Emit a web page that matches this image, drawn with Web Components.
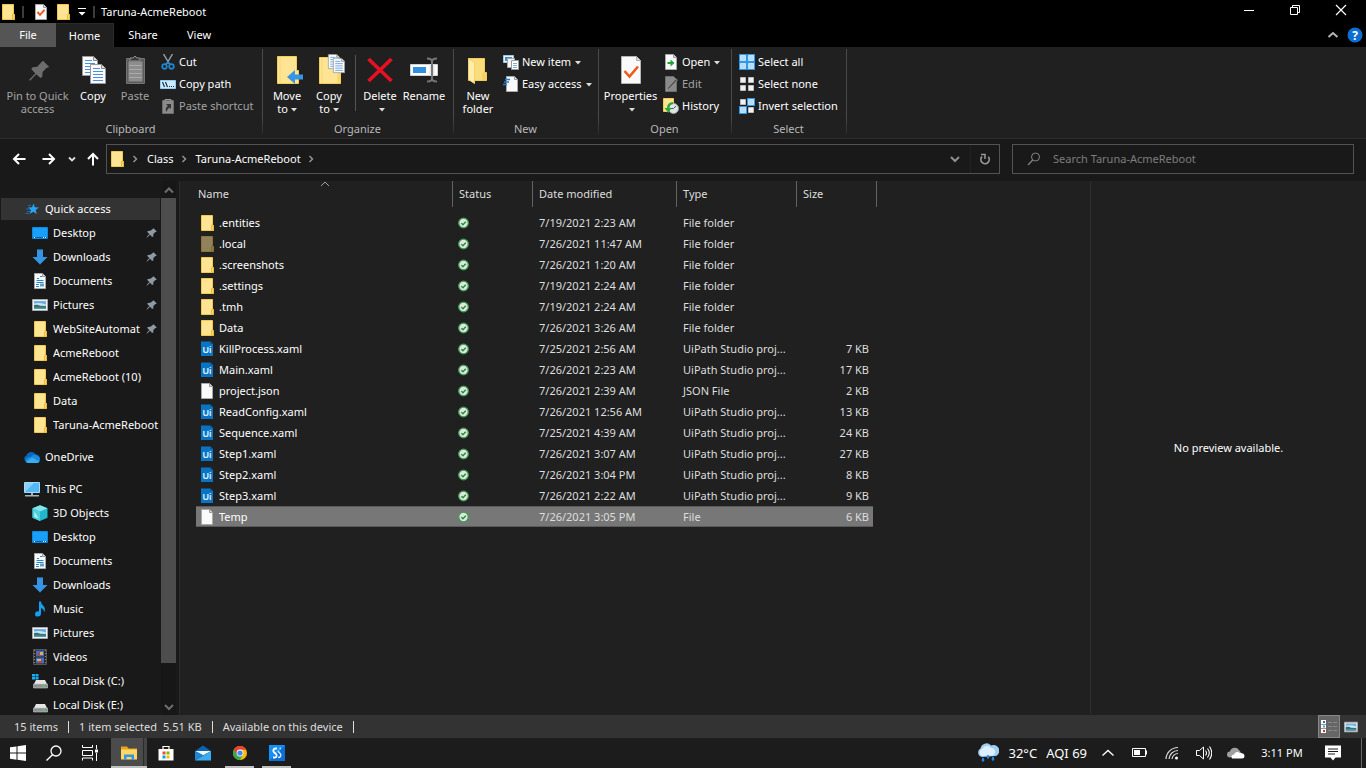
<!DOCTYPE html>
<html lang="en">
<head>
<meta charset="utf-8">
<meta name="viewport" content="width=device-width, initial-scale=1">
<title>Taruna-AcmeReboot</title>
<style>
  html, body {
    margin: 0;
    height: 100%;
  }
  body {
    background: #202020;
    color: #fff;
    font: 11px/16px "Noto Sans", "Open Sans", sans-serif;
    overflow: hidden;
  }
</style>
</head>
<body>
<explorer-window>
  <title-bar slot="top" heading="Taruna-AcmeReboot"></title-bar>
  <ribbon-tabs slot="top"></ribbon-tabs>
  <ribbon-bar slot="top">
    <ribbon-group label="Clipboard" style="--group-width: 263px">
      <ribbon-button big icon="pinBig" disabled style="--button-width: 69px">Pin to Quick access</ribbon-button>
      <ribbon-button big icon="copy">Copy</ribbon-button>
      <ribbon-button big icon="paste" disabled>Paste</ribbon-button>
      <ribbon-column>
        <ribbon-button icon="cut">Cut</ribbon-button>
        <ribbon-button icon="copyPath">Copy path</ribbon-button>
        <ribbon-button icon="pasteShortcut" disabled>Paste shortcut</ribbon-button>
      </ribbon-column>
    </ribbon-group>
    <ribbon-group label="Organize" style="--group-width: 191px">
      <ribbon-button big menu icon="moveTo">Move<br>to</ribbon-button>
      <ribbon-button big menu icon="copyTo">Copy<br>to</ribbon-button>
      <ribbon-divider></ribbon-divider>
      <ribbon-button big menu icon="delete">Delete</ribbon-button>
      <ribbon-button big icon="rename" style="--button-width: 46px">Rename</ribbon-button>
    </ribbon-group>
    <ribbon-group label="New" style="--group-width: 145px">
      <ribbon-button big icon="newFolder">New folder</ribbon-button>
      <ribbon-column>
        <ribbon-button menu icon="newItem">New item</ribbon-button>
        <ribbon-button menu icon="easyAccess">Easy access</ribbon-button>
      </ribbon-column>
    </ribbon-group>
    <ribbon-group label="Open" style="--group-width: 133px">
      <ribbon-button big menu icon="properties" style="--button-width: 57px">Properties</ribbon-button>
      <ribbon-column>
        <ribbon-button menu icon="open">Open</ribbon-button>
        <ribbon-button icon="edit" disabled>Edit</ribbon-button>
        <ribbon-button icon="history">History</ribbon-button>
      </ribbon-column>
    </ribbon-group>
    <ribbon-group label="Select" style="--group-width: 115px">
      <ribbon-column>
        <ribbon-button icon="selectAll">Select all</ribbon-button>
        <ribbon-button icon="selectNone">Select none</ribbon-button>
        <ribbon-button icon="invert">Invert selection</ribbon-button>
      </ribbon-column>
    </ribbon-group>
  </ribbon-bar>
  <address-bar slot="top" placeholder="Search Taruna-AcmeReboot"></address-bar>

  <nav-pane slot="nav">
    <nav-item icon="star" root current>Quick access</nav-item>
    <nav-item icon="desktop" pinned>Desktop</nav-item>
    <nav-item icon="download" pinned>Downloads</nav-item>
    <nav-item icon="document" pinned>Documents</nav-item>
    <nav-item icon="picture" pinned>Pictures</nav-item>
    <nav-item icon="folder" pinned>WebSiteAutomat</nav-item>
    <nav-item icon="folder">AcmeReboot</nav-item>
    <nav-item icon="folder">AcmeReboot (10)</nav-item>
    <nav-item icon="folder">Data</nav-item>
    <nav-item icon="folder">Taruna-AcmeReboot</nav-item>
    <nav-item icon="oneDrive" root>OneDrive</nav-item>
    <nav-item icon="pc" root>This PC</nav-item>
    <nav-item icon="cube">3D Objects</nav-item>
    <nav-item icon="desktop">Desktop</nav-item>
    <nav-item icon="document">Documents</nav-item>
    <nav-item icon="download">Downloads</nav-item>
    <nav-item icon="music">Music</nav-item>
    <nav-item icon="picture">Pictures</nav-item>
    <nav-item icon="video">Videos</nav-item>
    <nav-item icon="diskC">Local Disk (C:)</nav-item>
    <nav-item icon="disk">Local Disk (E:)</nav-item>
  </nav-pane>
  <file-list slot="files"></file-list>
  <preview-pane slot="preview">No preview available.</preview-pane>
  <status-bar slot="bottom"></status-bar>
  <task-bar slot="bottom"></task-bar>
</explorer-window>

<script>
// Shapes shared by several icons.
const FOLDER = `
  <path d="M2.5.5h11v10h1v5h-12z" fill="#ffe494" stroke="#f5c944"/>
  <path d="M12.5 15v-4.500h2v5h-2" fill="#ffd96a" stroke="#e8b93b"/>`
const PAGE = '<path d="M2.500.5h8l3 3v12h-11z" fill="#fafafa" stroke="#a9a9a9"/><path d="M10.500.5v3h3" fill="#ddd" stroke="#999"/>'
const SHEET = '<path d="M.5.5h11l4 4v15H.5z" fill="#fafafa" stroke="#999"/><path d="M11.500.5v4h4" fill="#ddd" stroke="#888"/><path d="M3 4.500h7M3 7.500h10M3 10.500h10M3 13.500h10M3 16.500h10" stroke="#4a90e2"/>'
const DRIVE = '<path d="M4 7h9l2 4H2z" fill="#e6e6e6"/><path d="M1.500 11h14v4h-14z" fill="#8f9295" stroke="#c8c8c8" stroke-width=".6"/><circle cx="12" cy="13" r="1" fill="#3be04b"/>'
const PIN = '<path d="M10 1.500 14.500 6l-2 .6-2.600 2.600-.3 3.300-1.400.8-2.700-3L1.500 14 .9 14l0-.7 3.600-4-2.900-2.600.8-1.300 3.400-.3L8.400 3z" fill="#8e99a3"/>'
const PICTURE = '<path d="M.5 2.500h15v11H.5z" fill="#f4f4f4" stroke="#a8a8a8"/><path d="M2 4h12v8H2z" fill="#70aee8"/><path d="M2 6.500q6-1.500 12 1V9H2z" fill="#c9e6f5"/><path d="M2 8q4-1 6 .8L14 9v3H2z" fill="#39736a"/><path d="M2 10.500h12V12H2z" fill="#4f97b5"/>'
const SMALL_BOX = (x, y, on) => on
  ? `<path d="M${x} ${y}h8v8h-8z" fill="#2f96e8"/><path d="M${x + 1.5} ${y + 1.5}h5v5h-5z" fill="#b5ddfb" stroke="#e5f5ff" stroke-width=".7"/>`
  : `<path d="M${x + 1.5} ${y + 1.5}h5v5h-5z" fill="#f2f2f2" stroke="#bdbdbd"/>`

// [viewBox width, viewBox height, markup]
const ICONS = {
  folder: [16, 16, FOLDER],
  page: [16, 16, PAGE],
  uipath: [16, 16, '<path d="M2 .5h9.500L14 3v12H2z" fill="#0a74c4"/><path d="M11.500.5V3H14" fill="#064f8c"/><text x="8" y="11.500" text-anchor="middle" font-family="Liberation Sans, sans-serif" font-weight="700" font-size="9" fill="#d8ecfa">Ui</text>'],
  check: [16, 16, '<circle cx="8.500" cy="8" r="4.800" fill="#dfe6df" stroke="#3a9d4c" stroke-width="1.300"/><path d="m6.300 8.100 1.600 1.600 2.900-3" fill="none" stroke="#23863a" stroke-width="1.300"/>'],
  titleCheck: [16, 16, PAGE + '<path d="m4.500 8 2.500 2.800 4.500-5" fill="none" stroke="#ee5a1c" stroke-width="2"/>'],
  quickMenu: [10, 10, '<path d="M1 1.500h8" stroke="#fff"/><path d="M1.500 5h7L5 8.500z" fill="#fff"/>'],
  caret: [6, 4, '<path d="M0 0h6L3 3.500z" fill="#ddd"/>'],
  minimize: [12, 12, '<path d="M1 6.500h10" stroke="#fff"/>'],
  restore: [12, 12, '<path d="M1.500 3.500h7v7h-7zM3.500 3V1.500h7v7H9" fill="none" stroke="#fff"/>'],
  close: [12, 12, '<path d="m1 1 10 10M11 1 1 11" stroke="#fff" stroke-width="1.200"/>'],
  collapse: [12, 12, '<path d="m1.500 8 4.500-4 4.500 4" fill="none" stroke="#b5b5b5" stroke-width="2"/>'],
  help: [16, 16, '<circle cx="8" cy="8" r="7.500" fill="#0a6fd0"/><text x="8" y="12.500" text-anchor="middle" font-family="Open Sans, sans-serif" font-weight="700" font-size="12" fill="#fff">?</text>'],
  pinBig: [32, 32, '<g transform="translate(7 6) scale(1.400)"><path d="M10 .5 14.500 5l-2 .8-2.800 2.800-.2 3.300-1.300 1-3-2.800L1 14.600H.3V14l4.200-4.400L1.600 6.500l1-1.300 3.300-.3L8.500 2z" fill="#6d6d6d"/></g>'],
  copy: [32, 32, `<g transform="translate(5 2)">${SHEET}</g><g transform="translate(13 10)">${SHEET}</g>`],
  paste: [32, 32, '<path d="M7.500 4.500h18v25h-18z" fill="#5c5c5c" stroke="#737373"/><path d="M9.500 7.500h14v20h-14z" fill="#8d8d8d"/><path d="M10 11.500h13M10 15.500h13M10 19.500h13M10 23.500h13" stroke="#a9a9a9"/><path d="M11 7V4h3l2-2 2 2h3v3z" fill="#3c3c3c" stroke="#909090"/>'],
  cut: [16, 16, '<path d="M3.500 0 10 11M12.500 0 6 11" stroke="#9aa2a9" stroke-width="1.400"/><g fill="none" stroke="#1e88d2" stroke-width="1.700"><circle cx="4.500" cy="12.500" r="2.300"/><circle cx="11.500" cy="12.500" r="2.300"/><path d="m6 10 2-2 2 2"/></g>'],
  copyPath: [16, 16, '<path d="M.5 4.500h15v8H.5z" fill="#cfeafc" stroke="#8ecdf7"/><path d="m2.500 6 2 5M5.500 6l2 5M9 10.500h1M11 10.500h1M13 10.500h1" stroke="#16324f" stroke-width="1.200"/>'],
  pasteShortcut: [16, 16, '<path d="M2.500 2.500h11v13h-11z" fill="#8a8a8a" stroke="#6c6c6c"/><path d="M5 3V1.500h6V3" fill="none" stroke="#999"/><path d="M6 6h5v5L9.500 9.500Q7 11 6.500 14 4.500 10.500 7.800 7.800z" fill="#333"/>'],
  moveTo: [32, 32, '<path d="M6.500 2.500h19v14h2v13h-21z" fill="#ffe494" stroke="#f3cc55"/><path d="M9 3v26" stroke="#f5d676"/><path d="M16 23l8-7v4.500h8v5h-8V30z" fill="#3795e5"/>'],
  copyTo: [32, 32, '<path d="M6.500 3.500h19v14h2v12h-21z" fill="#ffe494" stroke="#f3cc55"/><path d="M9 4v25" stroke="#f5d676"/><path d="M24.500 29V18h3v11" fill="#f8d668"/><g transform="translate(15 0) scale(.75)">' + SHEET + '</g><g transform="translate(20 4) scale(.75)">' + SHEET + '</g>'],
  delete: [32, 32, '<path d="m4.500 5 23 22M27.500 5l-23 22" stroke="#e81123" stroke-width="3.600"/>'],
  rename: [32, 32, '<path d="M2.500 10.500h27v11h-27z" fill="#fff" stroke="#d0d0d0"/><path d="M5 13h13v6H5z" fill="#2f8fe0"/><path d="M24 8v17" stroke="#e4e4e4" stroke-width="5"/><path d="M24 5v5M24 22v5" stroke="#202020" stroke-width="6"/><path d="M19 4.500q5 0 5 3v17q0 3-5 3M29 4.500q-5 0-5 3v17q0 3 5 3" fill="none" stroke="#777" stroke-width="2"/>'],
  newFolder: [32, 32, '<path d="M6.500 4.500h16v14h2v8h-18z" fill="#fbdc7c" stroke="#f3cc55"/><path d="m6.500 4.500 6 4v21l-6-4z" fill="#ffedb0" stroke="#f2d06b"/><path d="M20.500 26v-8h3v8z" fill="#f5cf60"/>'],
  newItem: [16, 16, '<path d="M.5 1.500h10v7H.5z" fill="#e8f4fc" stroke="#aac6da"/><path d="M2 3h7v4H2z" fill="#3d8ec9"/><path d="M4.500 4.500h7v9h-7z" fill="#f5f5f5" stroke="#a5a5a5"/><path d="M8.500 6.500h7v9h-7z" fill="#fff" stroke="#999"/><path d="M10 9.500h4M10 11.500h4M10 13.500h4" stroke="#7aaedc"/>'],
  easyAccess: [16, 16, '<path d="M3.500.5h8l3 3v12h-11z" fill="#fafafa" stroke="#a9a9a9"/><path d="M11.500.5v3h3" fill="none" stroke="#999"/><path d="M2 3.500h5M1 6h5M0 8.500h4" stroke="#1f7fd0" stroke-width="1.400"/>'],
  properties: [32, 32, '<path d="M6.500 2.500h15l4 4v23h-19z" fill="#fafafa" stroke="#b5b5b5"/><path d="M21.500 2.500v4h4" fill="#ddd" stroke="#aaa"/><path d="m9.500 17 5 5.500 8.500-10" fill="none" stroke="#ee5a1c" stroke-width="2.600"/>'],
  open: [16, 16, PAGE + '<path d="M4.500 8h3V5.500L11.500 9l-4 3.500V10h-3z" fill="#22a33a"/>'],
  edit: [16, 16, '<path d="M2.500.5h8l3 3v12h-11z" fill="#8a8a8a" stroke="#6e6e6e"/><path d="M14.500 4 6 13l-2 2 1-3.500L12.500 3z" fill="#4d4d4d" stroke="#a5a5a5" stroke-width=".6"/>'],
  history: [16, 16, '<path d="M.5.5h10v13H.5z" fill="#ffe494" stroke="#f3cc55"/><circle cx="10.500" cy="10.500" r="5" fill="#dfe6ea" stroke="#9aa3a8"/><path d="M10.500 10.500 13 8M10.500 10.500H7" stroke="#555"/><path d="M10 4Q4 4.500 4 10H1.500L5.500 15l3-5H6.500Q6.500 6.500 10 6z" fill="#2ea836"/>'],
  selectAll: [16, 16, SMALL_BOX(0, 0, true) + SMALL_BOX(8, 0, true) + SMALL_BOX(0, 8, true) + SMALL_BOX(8, 8, true)],
  selectNone: [16, 16, SMALL_BOX(0, 0) + SMALL_BOX(8, 0) + SMALL_BOX(0, 8) + SMALL_BOX(8, 8)],
  invert: [16, 16, SMALL_BOX(0, 0) + SMALL_BOX(8, 0, true) + SMALL_BOX(0, 8, true) + SMALL_BOX(8, 8)],
  back: [14, 14, '<path d="M13.500 7H2M7 2 2 7l5 5" fill="none" stroke="#fff" stroke-width="2"/>'],
  forward: [14, 14, '<path d="M.5 7H12M7 2l5 5-5 5" fill="none" stroke="#fff" stroke-width="2"/>'],
  up: [14, 14, '<path d="M7 13.500V2M2 7l5-5 5 5" fill="none" stroke="#fff" stroke-width="2"/>'],
  recent: [8, 8, '<path d="m1 2.500 3 3 3-3" fill="none" stroke="#ddd" stroke-width="1.800"/>'],
  crumb: [8, 8, '<path d="m2.500 1 3 3-3 3" fill="none" stroke="#999" stroke-width="1.400"/>'],
  down: [10, 10, '<path d="m1 3 4 4 4-4" fill="none" stroke="#8f8f8f" stroke-width="2"/>'],
  refresh: [12, 12, '<path d="M9.300 3.800A4.200 4.200 0 1 1 3 3.600" fill="none" stroke="#999" stroke-width="1.700"/><path d="M2 1.500h4V6" fill="none" stroke="#999" stroke-width="1.500"/>'],
  search: [14, 14, '<circle cx="8.500" cy="5" r="4" fill="none" stroke="#868686"/><path d="M5.700 8 1 13" stroke="#868686" stroke-width="1.200"/>'],
  arrowUp: [12, 12, '<path d="m2 8.500 4-4 4 4" fill="none" stroke="#6e6e6e" stroke-width="2"/>'],
  arrowDown: [12, 12, '<path d="m2 4 4 4 4-4" fill="none" stroke="#6e6e6e" stroke-width="2"/>'],
  sort: [10, 6, '<path d="m1 5 4-4 4 4" fill="none" stroke="#a0a0a0"/>'],
  pin: [16, 16, PIN],
  star: [16, 16, '<path d="m9.500 2.500 1.300 3.800 4.200.1-3.300 2.600 1.100 4-3.500-2.300L5.700 13l1.200-4-3-2.500 4.200-.2z" fill="#26a5f5"/><path d="M4 4.500h3M2 8h4M3 10.500h3M1.500 12.500H5" stroke="#1b6fae"/>'],
  desktop: [16, 16, '<path d="M.5 2.500h15v11H.5z" fill="#17a0fb" stroke="#1486d6"/><path d="M1 12.500h14" stroke="#075fae"/><path d="M2 12.500h1M11 12.500h1M13 12.500h1" stroke="#fff"/>'],
  download: [16, 16, '<path d="M5 .5h6V8h4.500L8 15.500.5 8H5z" fill="#3694e4"/>'],
  document: [16, 16, PAGE + '<path d="M5 5.500h2M4.500 7.500h7M4.500 9.500h7M4 11.500h3M4 13.500h3M8 3.500h2" stroke="#1f86d8"/><path d="M8 10.500h4v3H8z" fill="#6b9fb8"/>'],
  picture: [16, 16, PICTURE],
  oneDrive: [16, 16, '<path d="M3 12.500a3 3 0 0 1-.8-5.800A5.300 5.300 0 0 1 11.500 5Q15.500 6 15.800 9L8 12z" fill="#0a66b8"/><path d="M1 11.500Q4 7 7 8q2-3.500 6-1.500 3 1 3 4 0 3-3 3H3.500Q1.500 13.500 1 11.500z" fill="#1a8ade"/><path d="m2 13 6-4.500 7.500 4Q14.500 14 13 14H3.500z" fill="#35aef1"/>'],
  pc: [16, 16, '<path d="M.5 1.500h15v10H.5z" fill="#53b6f5" stroke="#a8d8f5"/><path d="M1 11V2h9z" fill="#8ad0fb"/><path d="M7 12h2v2H7zM1 14h14v1.500H1z" fill="#9fb4c2"/>'],
  cube: [16, 16, '<path d="m8 .3 7.500 3v9.500L8 16 .5 12.800V3.300z" fill="#21b8cc"/><path d="m8 .3 7.500 3L8 6.500.5 3.300z" fill="#86e5ec"/><path d="M.5 3.300 8 6.500V16L.5 12.800z" fill="#4fd0dc"/><path d="m2.500 6.500 4 7-4-2z" fill="#bdf3f5"/>'],
  music: [16, 16, '<path d="M7 .5h2q0 2.500 2.500 4.500Q14 8 12 11.500q.3-3.500-3-4.500v5.200Q9 15.500 5.800 15.500 3 15.500 3 13.200 3 10 7 10.300z" fill="#149ff5"/>'],
  video: [16, 16, '<path d="M1.500.5h13v15h-13z" fill="#222" stroke="#555"/><path d="M4 1.500h8v6H4zM4 8.500h8v6H4z" fill="#3f6fc4"/><path d="M5 4.500h3v2H5zM7 12h3v2H7z" fill="#d83434"/><path d="M8 3h3v3H8zM5 10h4v2H5z" fill="#e0b23a"/><path d="M2.700 1v14M13.300 1v14" stroke="#999" stroke-dasharray="1.200 1.800"/>'],
  disk: [16, 16, DRIVE],
  diskC: [16, 16, DRIVE + '<path d="M0 1h3v2.500H0zM3.500 1h3v2.500h-3zM0 4h3v2.500H0zM3.500 4h3v2.500h-3z" fill="#18aef5"/>'],
  details: [16, 14, '<path d="M0 0h5v13H0z" fill="#fff"/><path d="M0 4.500h5M0 8.500h5" stroke="#999"/><path d="M2 1h2v2H2z" fill="#3a6ea5"/><path d="M2 5.500h2v2H2z" fill="#36a0f0"/><path d="M2 10h2v2H2z" fill="#d13438"/><path d="M7 2.500h4M12 2.500h4M7 6.500h4M12 6.500h4M7 10.500h4M12 10.500h4" stroke="#888"/>'],
  windows: [16, 16, '<path d="m0 2.300 6.500-.9v6.200H0zM7.500 1.200 16 0v7.600H7.500zM0 8.500h6.500v6.200L0 13.800zM7.500 8.500H16V16l-8.500-1.200z" fill="#fff"/>'],
  taskSearch: [16, 16, '<circle cx="10" cy="6" r="5" fill="none" stroke="#fff" stroke-width="1.300"/><path d="M6.500 9.700.5 15.500" stroke="#fff" stroke-width="1.400"/>'],
  taskView: [16, 16, '<path d="M.5 0v2.500h10V0M.5 5.500h10v5H.5zM.5 15.500V13h10v2.500M14.500 0v4M14.500 8v8" fill="none" stroke="#fff"/><path d="M13 4.500h3v3h-3z" fill="#fff"/>'],
  explorer: [16, 16, '<path d="M0 1.500h6l1.500 2H16V14H0z" fill="#e5a718"/><path d="M0 4.500h16V14.500H0z" fill="#ffd767"/><path d="M3 15V9.500h10V15h-2.500v-3h-5v3z" fill="#3695e0"/>'],
  store: [16, 16, '<path d="M5 4V1.500h6V4" fill="none" stroke="#fff" stroke-width="1.200"/><path d="M.5 4h15v11.500H.5z" fill="#fff"/><path d="M4.500 6.500h3v3h-3z" fill="#f25022"/><path d="M8.500 6.500h3v3h-3z" fill="#7fba00"/><path d="M4.500 10.500h3v3h-3z" fill="#00a4ef"/><path d="M8.500 10.500h3v3h-3z" fill="#ffb900"/>'],
  mail: [16, 16, '<path d="M0 6 8 .5 16 6v2H0z" fill="#0c63b0"/><path d="M0 6h16L8 10.500z" fill="#e8f3fb"/><path d="M0 6v9.500L9 10z" fill="#1f86d6"/><path d="M16 6v9.500H0z" fill="#38aef0"/><path d="M2 6h12l-6 4z" fill="#f2f8fc"/>'],
  chrome: [16, 16, '<circle cx="8" cy="8" r="7" fill="#fbbc05"/><path d="M8 8 1.900 4.500A7 7 0 0 0 8 15l3-5.300z" fill="#34a853"/><path d="M8 4.700h6.200A7 7 0 0 0 1.900 4.500L5 9.700z" fill="#ea4335"/><circle cx="8" cy="8" r="3.400" fill="#fff"/><circle cx="8" cy="8" r="2.600" fill="#4285f4"/>'],
  studio: [16, 16, '<path d="M0 0h16v16H0z" fill="#0b6fd8"/><path d="M0 0h16L0 16z" fill="#1590f5"/><path d="M8 3.500H6.500a2.200 2.200 0 0 0-1.500 3.800l2 1.700a2 2 0 0 1-1.500 3.500H4" fill="none" stroke="#fff" stroke-width="1.800"/><path d="M12 3.500h-1.500M9.500 5.500v1.500l1.700 1.500q1 1 .3 2.800-.6 1.200-2.500 1.200" fill="none" stroke="#d5eafc" stroke-width="1.500"/>'],
  weather: [22, 20, '<path d="M5 14A4.500 4.500 0 0 1 3.500 5.600 6 6 0 0 1 14 2.500a5.500 5.500 0 0 1 5 10.500z" fill="#9fd0f3"/><path d="M5 13a4 4 0 0 1 .5-7.500A5 5 0 0 1 14 5a4 4 0 0 1 2 7.500z" fill="#dff0fc"/><path d="M6 15q2 2.500 0 3.500-2-1 0-3.500zM11 12q2 2.500 0 3.500-2-1 0-3.500zM16 14q2 2.500 0 3.500-2-1 0-3.500z" fill="#238fe5" stroke="#238fe5"/>'],
  trayUp: [12, 12, '<path d="m.5 8.500 5.500-5 5.500 5" fill="none" stroke="#fff" stroke-width="1.300"/>'],
  battery: [16, 12, '<path d="M.5 1.500h13v8H.5zM14.500 3.500v4" fill="none" stroke="#fff"/><path d="M2 3h6v5H2z" fill="#fff"/>'],
  wifi: [14, 14, '<path d="M1 13A12 12 0 0 1 13 1.500M4 13a9 9 0 0 1 9-8.500M7 13a6 6 0 0 1 6-5.500" fill="none" stroke="#ddd" stroke-width="1.200"/><circle cx="11.500" cy="12" r="1.500" fill="#fff"/>'],
  volume: [16, 14, '<path d="M.5 4.500h3L7.500 1v12l-4-3.500h-3z" fill="none" stroke="#fff"/><path d="M9.500 4.500q2 2.500 0 5M11.500 2.500q3.500 4.500 0 9M13.500.5q4.500 6.500 0 13" fill="none" stroke="#fff" stroke-width="1.100"/>'],
  cloud: [18, 12, '<path d="M3 10.500a3 3 0 0 1 0-6A5 5 0 0 1 12 3l3 4z" fill="#a0a0a0"/><path d="M5 11.500Q3 8 7 7.500q2-4 6-1.500 4.500 0 4.500 3.300 0 2.200-2.500 2.200z" fill="#fff"/>'],
  note: [16, 16, '<path d="M0 .5h16v12h-5.500L8 15.500l-2.500-3H0z" fill="#fff"/><path d="M3 4h10M3 6.500h10M3 9h7" stroke="#1c1c1c"/>']
}

/** Returns the SVG markup of an icon, at its natural size unless one is given. */
const icon = (name, w, h) => {
  const [vw, vh, body] = ICONS[name]
  return `<svg class="i-${name}" width="${w || vw}" height="${h || vh}" viewBox="0 0 ${vw} ${vh}" aria-hidden="true">${body}</svg>`
}

// Rules that every shadow root needs.
const BASE = `
  :host, * { box-sizing: border-box; }
  svg { display: block; flex: none; }
  button { font: inherit; color: inherit; background: none; border: 0; padding: 0; margin: 0; }
  a { color: inherit; text-decoration: none; }
`

/** Base class: opens the shadow root and fills it with render(). */
class WinElement extends HTMLElement {
  constructor() {
    super()
    this.attachShadow({ mode: 'open' })
  }

  connectedCallback() {
    this.shadowRoot.innerHTML = `<style>${BASE}${this.styles()}</style>${this.render()}`
  }

  styles() {
    return ':host { display: block; }'
  }

  render() {
    return '<slot></slot>'
  }
}

customElements.define('explorer-window', class extends WinElement {
  styles() {
    return `
      :host { display: flex; flex-direction: column; height: 100vh; }
      main { flex: 1; min-height: 0; display: flex; }
    `
  }

  render() {
    return `
      <slot name="top"></slot>
      <main><slot name="nav"></slot><slot name="files"></slot><slot name="preview"></slot></main>
      <slot name="bottom"></slot>
    `
  }
})

customElements.define('title-bar', class extends WinElement {
  styles() {
    return `
      :host { display: flex; align-items: center; height: 23px; background: #000; padding-right: 2px; }
      .quick { display: flex; align-items: center; flex: 1; }
      .bar { width: 2px; height: 12px; background: #3c3c3c; margin: 0 6px; }
      .bar:first-of-type { margin: 0 9px 0 6px; }
      .quick button { margin-right: 6px; }
      .quick .menu { margin: 0; }
      h1 { font: inherit; margin: 0; }
      .controls { display: flex; height: 100%; }
      .controls button { width: 46px; display: grid; justify-content: center; padding-top: 4px; }
    `
  }

  render() {
    return `
      <div class="quick">
        ${icon('folder')}<span class="bar"></span>
        <button aria-label="Properties">${icon('titleCheck')}</button>
        <button aria-label="New folder">${icon('folder')}</button>
        <button class="menu" aria-label="Customize toolbar">${icon('quickMenu')}</button>
        <span class="bar"></span>
        <h1>${this.getAttribute('heading')}</h1>
      </div>
      <div class="controls">
        <button aria-label="Minimize">${icon('minimize')}</button>
        <button aria-label="Restore">${icon('restore')}</button>
        <button aria-label="Close">${icon('close')}</button>
      </div>
    `
  }
})

customElements.define('ribbon-tabs', class extends WinElement {
  styles() {
    return `
      :host { display: flex; height: 24px; background: #000; align-items: center; }
      nav { display: flex; flex: 1; height: 100%; }
      nav button { width: 58px; }
      nav .file { width: 56px; background: #555; }
      .current { background: #202020; border: 1px solid #2b2b2b; border-width: 1px 1px 0 0; }
      nav .last { width: 54px; }
      .side { padding-right: 3px; display: flex; align-items: center; gap: 8px; }
    `
  }

  render() {
    return `
      <nav>
        <button class="file">File</button>
        <button class="current">Home</button>
        <button>Share</button>
        <button class="last">View</button>
      </nav>
      <div class="side">
        <button aria-label="Collapse ribbon">${icon('collapse')}</button>
        <button aria-label="Help">${icon('help')}</button>
      </div>
    `
  }
})

customElements.define('ribbon-bar', class extends WinElement {
  styles() {
    return ':host { display: flex; height: 92px; background: #202020; border-bottom: 1px solid #2d2d2d; }'
  }
})

customElements.define('ribbon-group', class extends WinElement {
  styles() {
    return `
      :host { display: flex; flex-direction: column; width: var(--group-width); position: relative; padding: 4px 3px 0; }
      :host::after { content: ""; position: absolute; right: 0; top: 2px; bottom: 4px; width: 1px; background: linear-gradient(#4a4a4a 80%, #2a2a2a); }
      .items { display: flex; height: 70px; }
      .label { padding-right: 2px; text-align: center; color: #b8b8b8; }
    `
  }

  render() {
    return `<div class="items"><slot></slot></div><div class="label">${this.getAttribute('label')}</div>`
  }
})

customElements.define('ribbon-column', class extends WinElement {
  styles() {
    return ':host { display: flex; flex-direction: column; }'
  }
})

customElements.define('ribbon-divider', class extends WinElement {
  styles() {
    return ':host { width: 1px; height: 56px; margin: 4px 3px 0 5px; background: #555; }'
  }
})

/** Ribbon command: "big" puts the icon on top, "menu" adds a drop-down arrow. */
customElements.define('ribbon-button', class extends WinElement {
  styles() {
    return `
      button { display: flex; align-items: center; gap: 3px; height: 22px; padding: 0 4px; white-space: nowrap; }
      button:disabled { color: #a3a3a3; }
      .text svg { display: inline-block; vertical-align: middle; margin-left: 4px; }
      :host([big]) button { flex-direction: column; gap: 3px; width: var(--button-width, 42px); height: 70px; padding: 3px 0 0; line-height: 13px; white-space: normal; }
      :host([big]) .text { display: block; }
      :host([big]) .text svg { margin-left: 3px; }
    `
  }

  render() {
    const arrow = this.hasAttribute('menu') ? icon('caret') : ''
    return `<button ${this.hasAttribute('disabled') ? 'disabled' : ''}>
      ${icon(this.getAttribute('icon'))}<span class="text"><slot></slot>${arrow}</span>
    </button>`
  }
})

customElements.define('address-bar', class extends WinElement {
  styles() {
    return `
      :host { display: flex; align-items: center; height: 42px; padding: 0 12px 2px; background: #191919; }
      .arrows { display: flex; align-items: center; margin-right: 6px; }
      .arrows button:nth-child(1) { margin-right: 16px; }
      .arrows button:nth-child(2) { margin-right: 12px; }
      .arrows button:nth-child(3) { margin-right: 10px; }
      .path, .search { display: flex; align-items: center; height: 30px; border: 1px solid #535353; }
      .path { flex: 1; margin-right: 12px; padding-left: 2px; }
      .path > svg { margin: 0 8px 0 6px; }
      .path > svg.i-folder { margin: 0; }
      .path .end { display: flex; align-items: center; margin-left: auto; height: 100%; }
      .end button:first-child { padding: 0 10px; }
      .end button:last-child { height: 100%; padding: 0 8px; border-left: 1px solid #222; }
      .search { width: 342px; padding-left: 14px; }
      input { flex: 1; min-width: 0; margin-left: 12px; padding: 0; border: 0; outline: 0; background: none; font: inherit; color: #fff; }
      input::placeholder { color: #7d7d7d; opacity: 1; }
    `
  }

  render() {
    return `
      <div class="arrows">
        <button aria-label="Back">${icon('back')}</button>
        <button aria-label="Forward">${icon('forward')}</button>
        <button aria-label="Recent locations">${icon('recent')}</button>
        <button aria-label="Up">${icon('up')}</button>
      </div>
      <div class="path">
        ${icon('folder')}${icon('crumb')}<a href="#class">Class</a>${icon('crumb')}<a href="#reboot">Taruna-AcmeReboot</a>${icon('crumb')}
        <span class="end">
          <button aria-label="Previous locations">${icon('down')}</button>
          <button aria-label="Refresh">${icon('refresh')}</button>
        </span>
      </div>
      <label class="search">${icon('search')}<input type="search" aria-label="Search" placeholder="${this.getAttribute('placeholder')}"></label>
    `
  }
})

customElements.define('nav-pane', class extends WinElement {
  styles() {
    return `
      :host { display: flex; width: 180px; background: #191919; border-right: 1px solid #2b2b2b; }
      .items { flex: 1; min-width: 0; overflow: hidden; padding: 16px 0 0 1px; }
      .scroll { display: flex; flex-direction: column; align-items: center; width: 15px; margin-right: 3px; padding: 3px 0 2px; background: #171717; }
      .thumb { width: 100%; height: 465px; flex: 0 1 465px; margin-top: 2px; background: #4d4d4d; }
      .scroll .i-arrowDown { margin-top: auto; }
    `
  }

  render() {
    return `
      <nav class="items"><slot></slot></nav>
      <div class="scroll">${icon('arrowUp')}<div class="thumb"></div>${icon('arrowDown')}</div>
    `
  }
})

customElements.define('nav-item', class extends WinElement {
  styles() {
    return `
      :host { display: block; padding: 1px 0; }
      :host([root]:not([current])) { margin-top: 8px; }
      a { display: flex; align-items: center; gap: 5px; height: 22px; padding-left: 31px; }
      :host([root]) a { padding-left: 23px; }
      :host([current]) a { background: #333; margin-right: 1px; }
      span { flex: 1; min-width: 0; overflow: hidden; white-space: nowrap; }
      .i-pin { margin: 0 3px 0 -3px; }
    `
  }

  render() {
    const pin = this.hasAttribute('pinned') ? icon('pin', 12, 12) : ''
    return `<a href="#${this.getAttribute('icon')}">${icon(this.getAttribute('icon'))}<span><slot></slot></span>${pin}</a>`
  }
})

const FILES = [
  ['folder', '.entities', '7/19/2021 2:23 AM', 'File folder', ''],
  ['folder', '.local', '7/26/2021 11:47 AM', 'File folder', '', 'hidden'],
  ['folder', '.screenshots', '7/26/2021 1:20 AM', 'File folder', ''],
  ['folder', '.settings', '7/19/2021 2:24 AM', 'File folder', ''],
  ['folder', '.tmh', '7/19/2021 2:24 AM', 'File folder', ''],
  ['folder', 'Data', '7/26/2021 3:26 AM', 'File folder', ''],
  ['uipath', 'KillProcess.xaml', '7/25/2021 2:56 AM', 'UiPath Studio proj...', '7 KB'],
  ['uipath', 'Main.xaml', '7/26/2021 2:23 AM', 'UiPath Studio proj...', '17 KB'],
  ['page', 'project.json', '7/26/2021 2:39 AM', 'JSON File', '2 KB'],
  ['uipath', 'ReadConfig.xaml', '7/26/2021 12:56 AM', 'UiPath Studio proj...', '13 KB'],
  ['uipath', 'Sequence.xaml', '7/25/2021 4:39 AM', 'UiPath Studio proj...', '24 KB'],
  ['uipath', 'Step1.xaml', '7/26/2021 3:07 AM', 'UiPath Studio proj...', '27 KB'],
  ['uipath', 'Step2.xaml', '7/26/2021 3:04 PM', 'UiPath Studio proj...', '8 KB'],
  ['uipath', 'Step3.xaml', '7/26/2021 2:22 AM', 'UiPath Studio proj...', '9 KB'],
  ['page', 'Temp', '7/26/2021 3:05 PM', 'File', '6 KB', 'selected']
]

customElements.define('file-list', class extends WinElement {
  styles() {
    return `
      :host { display: block; flex: 1; min-width: 0; overflow: hidden; padding-left: 16px; background: #202020; }
      table { width: 681px; table-layout: fixed; border-spacing: 0; }
      th { position: relative; height: 31px; padding: 0; font-weight: 400; text-align: left; vertical-align: top; color: #dedede; }
      th span { display: block; height: 26px; padding: 5px 0 0 6px; border-right: 1px solid #636363; }
      th:first-child span { padding-left: 2px; }
      .i-sort { position: absolute; left: 50%; top: 0; translate: -50% 0; }
      td { height: 21px; padding: 0 0 0 6px; white-space: nowrap; color: #dedede; }
      td:first-child { padding-left: 3px; color: #fff; }
      td:nth-child(2) { padding-left: 2px; }
      td:last-child { padding: 0 4px 0 0; text-align: right; border-right: 4px solid transparent; background-clip: padding-box; }
      .name { display: flex; align-items: center; gap: 4px; }
      .hidden .name svg { opacity: .5; }
      .selected td { background-color: #777; box-shadow: inset 0 1px #5a5a5a, inset 0 -1px #5a5a5a; }
    `
  }

  render() {
    const rows = FILES.map(([img, name, date, type, size, state = '']) => `
      <tr class="${state}">
        <td><span class="name">${icon(img)}${name}</span></td>
        <td>${icon('check')}</td>
        <td>${date}</td><td>${type}</td><td>${size}</td>
      </tr>`).join('')
    return `
      <table>
        <colgroup><col style="width:257px"><col style="width:80px"><col style="width:144px"><col style="width:120px"><col style="width:80px"></colgroup>
        <thead><tr>
          <th><span>Name</span>${icon('sort')}</th><th><span>Status</span></th><th><span>Date modified</span></th><th><span>Type</span></th><th><span>Size</span></th>
        </tr></thead>
        <tbody>${rows}</tbody>
      </table>
    `
  }
})

customElements.define('preview-pane', class extends WinElement {
  styles() {
    return `
      :host { display: grid; place-items: center; width: 276px; border-left: 1px solid #2e2e2e; background: #202020; }
    `
  }
})

customElements.define('status-bar', class extends WinElement {
  styles() {
    return `
      :host { display: flex; align-items: center; height: 23px; padding: 0 8px 0 14px; background: #333; color: #dedede; }
      .sep { width: 1px; height: 12px; margin: 0 10px; background: #ddd; }
      .size { margin-left: 6px; }
      .views { display: flex; align-items: center; gap: 4px; margin-left: auto; height: 100%; }
      .on { display: grid; place-items: center; width: 22px; height: 100%; background: #666; border: 1px solid #888; }
    `
  }

  render() {
    return `
      <span>15 items</span><i class="sep"></i>
      <span>1 item selected</span><span class="size">5.51 KB</span><i class="sep"></i>
      <span>Available on this device</span><i class="sep"></i>
      <div class="views">
        <button class="on" aria-label="Details view">${icon('details')}</button>
        <button aria-label="Large icons view">${icon('picture', 14, 14)}</button>
      </div>
    `
  }
})

customElements.define('task-bar', class extends WinElement {
  styles() {
    return `
      :host { display: flex; align-items: stretch; height: 30px; background: #1c1c1c; }
      button { display: grid; place-items: center; }
      .apps, .tray { display: flex; }
      .tray { margin-left: auto; }
      .apps button { width: 36px; }
      .apps .app { width: 37px; position: relative; }
      .apps .active { width: 36px; margin-left: 3px; background: linear-gradient(90deg, #4b4b4b 32px, #2b2b2b 32px 33px, #444 33px); }
      .open::after { content: ""; position: absolute; bottom: 0; left: 4px; right: 4px; height: 2px; background: #c0c0c0; }
      .active::after { left: 0; right: 0; }
      .tray button { width: 32px; }
      .tray .weather { width: auto; display: flex; align-items: center; gap: 9px; padding-right: 5px; font-size: 13px; white-space: nowrap; }
      .tray .clock { width: 60px; white-space: nowrap; }
      .tray .note { width: 42px; }
      .edge { width: 5px; margin-left: 7px; border-left: 1px solid #666; }
    `
  }

  render() {
    return `
      <div class="apps">
        <button aria-label="Start">${icon('windows')}</button>
        <button aria-label="Search">${icon('taskSearch')}</button>
        <button aria-label="Task view">${icon('taskView')}</button>
        <button class="app open active" aria-label="File Explorer">${icon('explorer')}</button>
        <button class="app" aria-label="Store">${icon('store')}</button>
        <button class="app" aria-label="Mail">${icon('mail')}</button>
        <button class="app open" aria-label="Chrome">${icon('chrome')}</button>
        <button class="app open" aria-label="Studio">${icon('studio')}</button>
      </div>
      <div class="tray">
        <button class="weather">${icon('weather')}<span>32°C</span><span>AQI 69</span></button>
        <button aria-label="Show hidden icons">${icon('trayUp')}</button>
        <button aria-label="Battery">${icon('battery')}</button>
        <button aria-label="Network">${icon('wifi')}</button>
        <button aria-label="Volume">${icon('volume')}</button>
        <button aria-label="OneDrive">${icon('cloud')}</button>
        <button class="clock">3:11 PM</button>
        <button class="note" aria-label="Notifications">${icon('note')}</button>
        <span class="edge"></span>
      </div>
    `
  }
})
</script>
</body>
</html>
